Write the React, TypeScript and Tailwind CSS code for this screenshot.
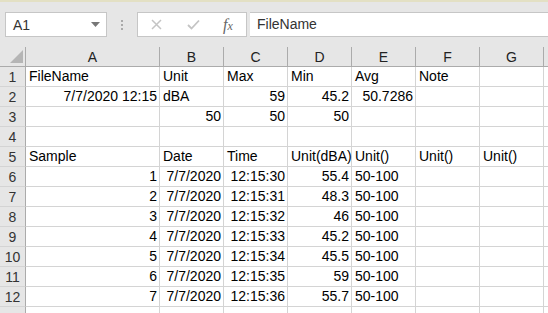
import React from "react";

const cols = ["A", "B", "C", "D", "E", "F", "G", ""];
const widths = ["w-[134px]", "w-[64px]", "w-[64px]", "w-[64px]", "w-[64px]", "w-[64px]", "w-[64px]", "w-[5px]"];

type Cell = { t: string; r?: boolean };
const L = (t: string): Cell => ({ t });
const R = (t: string): Cell => ({ t, r: true });
const E: Cell = { t: "" };

const rows: Cell[][] = [
  [L("FileName"), L("Unit"), L("Max"), L("Min"), L("Avg"), L("Note"), E, E],
  [R("7/7/2020 12:15"), L("dBA"), R("59"), R("45.2"), R("50.7286"), E, E, E],
  [E, R("50"), R("50"), R("50"), E, E, E, E],
  [E, E, E, E, E, E, E, E],
  [L("Sample"), L("Date"), L("Time"), L("Unit(dBA)"), L("Unit()"), L("Unit()"), L("Unit()"), E],
  ...[
    ["1", "12:15:30", "55.4"],
    ["2", "12:15:31", "48.3"],
    ["3", "12:15:32", "46"],
    ["4", "12:15:33", "45.2"],
    ["5", "12:15:34", "45.5"],
    ["6", "12:15:35", "59"],
    ["7", "12:15:36", "55.7"],
  ].map(([n, t, v]) => [R(n), R("7/7/2020"), R(t), R(v), L("50-100"), E, E, E]),
  [E, E, E, E, E, E, E, E],
];

export default function App() {
  return (
    <div
      className="w-[548px] h-[313px] overflow-hidden bg-[#e6e6e6] text-[14px]"
      style={{ fontFamily: '"Liberation Sans", Arial, sans-serif' }}
    >
      <div className="h-[2px] bg-[#e3e0c4]" />
      {/* formula bar */}
      <div className="flex items-start pt-[10px] h-[45px]">
        <div className="ml-[5px] w-[102px] h-[25px] bg-white border border-[#c6c6c6] flex items-center pl-[7px] pr-[6px] text-[#333]">
          <span className="flex-1 leading-none">A1</span>
          <svg width="9" height="5" viewBox="0 0 9 5">
            <path d="M0 0H9L4.5 5Z" fill="#777" />
          </svg>
        </div>
        <div className="w-[30px] h-[25px] flex flex-col items-center justify-center gap-[2px]">
          <div className="w-[2px] h-[2px] bg-[#aaa]" />
          <div className="w-[2px] h-[2px] bg-[#aaa]" />
          <div className="w-[2px] h-[2px] bg-[#aaa]" />
        </div>
        <div className="w-[110px] h-[25px] bg-white border border-[#c6c6c6] flex items-center">
          <svg className="ml-[13px]" width="11" height="11" viewBox="0 0 11 11">
            <path d="M1 1L10 10M10 1L1 10" stroke="#c4c4c4" strokeWidth="1.5" />
          </svg>
          <svg className="ml-[25px]" width="13" height="11" viewBox="0 0 13 11">
            <path d="M1 6L4.5 9.5L12 1.5" stroke="#c4c4c4" strokeWidth="1.8" fill="none" />
          </svg>
          <span
            className="ml-[23px] text-[#666] italic text-[16px] leading-none"
            style={{ fontFamily: '"Liberation Serif", serif' }}
          >
            f<span className="text-[12px]">x</span>
          </span>
        </div>
        <div className="ml-[3px] flex-1 h-[25px] bg-white border-y border-[#c6c6c6] flex items-center pl-[7px] text-[#333]">
          FileName
        </div>
      </div>
      {/* column header */}
      <div className="flex h-[20px] bg-[#e6e6e6] border-b border-[#ababab]">
        <div className="w-[26px] shrink-0 border-r border-[#ababab] relative">
          <svg className="absolute right-[2px] bottom-[3px]" width="13" height="13" viewBox="0 0 13 13">
            <path d="M13 0V13H0Z" fill="#b5b5b5" />
          </svg>
        </div>
        {cols.map((c, i) => (
          <div
            key={i}
            className={`${widths[i]} shrink-0 border-r border-[#ababab] flex items-center justify-center text-[#222] leading-none`}
          >
            {c}
          </div>
        ))}
      </div>
      {/* body */}
      <div className="bg-white">
        {rows.map((row, ri) => (
          <div key={ri} className="flex h-[20px]">
            <div className="w-[26px] shrink-0 bg-[#e6e6e6] border-r border-[#ababab] border-b border-b-[#d4d4d4] flex items-center justify-center text-[#333] leading-none">
              {ri < 12 ? ri + 1 : ""}
            </div>
            {row.map((c, ci) => (
              <div
                key={ci}
                className={`${widths[ci]} shrink-0 border-r border-b border-[#d4d4d4] flex items-end pb-[2px] text-black leading-[16px] whitespace-nowrap overflow-visible ${
                  c.r ? "justify-end pr-[2px]" : "justify-start pl-[3px]"
                }`}
              >
                {c.t}
              </div>
            ))}
          </div>
        ))}
      </div>
    </div>
  );
}
